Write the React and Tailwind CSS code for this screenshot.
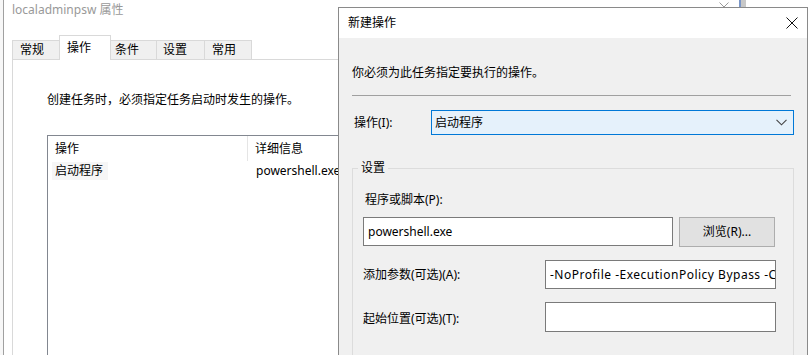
import React from 'react';

const font = { fontFamily: '"Noto Sans", "Noto Sans CJK SC", sans-serif' };

function Tab({ label, selected, width, pad }) {
  if (selected) {
    return (
      <div
        className={`relative z-10 -mr-px -mb-px h-[25px] border border-b-0 border-[#d9d9d9] bg-white pt-[4px] leading-4 ${width} ${pad}`}
      >
        {label}
      </div>
    );
  }
  return (
    <div
      className={`-mr-px flex h-[19px] items-center border border-b-0 border-[#d9d9d9] bg-[#f0f0f0] leading-4 ${width} ${pad}`}
    >
      {label}
    </div>
  );
}

function Chevron() {
  return (
    <svg width="11" height="7" viewBox="0 0 11 7" fill="none">
      <path d="M0.5 0.8 L5.5 5.8 L10.5 0.8" stroke="#444" strokeWidth="1.1" />
    </svg>
  );
}

function CloseX() {
  return (
    <svg width="12" height="12" viewBox="0 0 12 12" fill="none">
      <path d="M0.5 0.5 L11.5 11.5 M11.5 0.5 L0.5 11.5" stroke="#111" strokeWidth="1" />
    </svg>
  );
}

export default function App() {
  return (
    <div
      className="relative flex h-[355px] w-[810px] overflow-hidden bg-white text-[12px] text-black"
      style={font}
    >
      {/* window behind, only its edge shows */}
      <div className="w-[4px] shrink-0 border-r border-[#a0a0a0] bg-[#f7f7f7]" />

      {/* properties window */}
      <div className="flex w-[742px] shrink-0 flex-col overflow-hidden bg-white">
        <div className="flex h-[35px] shrink-0 items-start">
          <div className="ml-[8px] mt-[2px] leading-4 text-[#999]">localadminpsw 属性</div>
          <svg className="ml-auto mt-[2px]" width="10" height="10" viewBox="0 0 10 10" fill="none">
            <path d="M0.5 0.5 L9.5 9.5 M9.5 0.5 L0.5 9.5" stroke="#9a9a9a" strokeWidth="1" />
          </svg>
          <div className="ml-[10px] h-[8px] w-[2px] bg-[#7a96c8]" />
          <div className="h-[8px] w-[5px] bg-[#c8c8c8]" />
        </div>

        <div className="ml-[8px] flex shrink-0 items-end">
          <Tab label="常规" width="w-[48px]" pad="pl-[7px]" />
          <Tab label="操作" selected width="w-[52px]" pad="pl-[7px]" />
          <Tab label="条件" width="w-[47px]" pad="pl-[4px]" />
          <Tab label="设置" width="w-[49px]" pad="pl-[6px]" />
          <Tab label="常用" width="w-[48px]" pad="pl-[7px]" />
        </div>

        <div className="ml-[8px] flex-1 border border-b-0 border-r-0 border-[#d9d9d9] bg-white pl-[34px] pt-[32px]">
          <div className="leading-4">创建任务时，必须指定任务启动时发生的操作。</div>
          <div className="mt-[27px] h-[300px] border border-r-0 border-b-0 border-[#828790] bg-white">
            <div className="flex h-[25px]">
              <div className="flex w-[200px] items-center border-r border-[#e5e5e5] pl-[7px]">操作</div>
              <div className="flex items-center pl-[7px]">详细信息</div>
            </div>
            <div className="flex h-[20px] items-center">
              <div className="w-[200px] pl-[4px]">
                <span className="inline-block bg-[#f6f6f6] py-[1px] pl-[3px] pr-[5px] leading-4">启动程序</span>
              </div>
              <div className="pl-[8px] leading-4">powershell.exe</div>
            </div>
          </div>
        </div>
      </div>

      {/* new action dialog, on top */}
      <div className="absolute left-[338px] top-[7px] flex h-[360px] w-[470px] flex-col border border-[#8a8a8a] bg-[#f0f0f0]">
        <div className="flex h-[30px] shrink-0 items-center justify-between bg-white pl-[9px] pr-[9px]">
          <span className="leading-4">新建操作</span>
          <CloseX />
        </div>

        <div className="flex flex-col pl-[13px] pr-[13px] pt-[27px]">
          <div className="leading-4">你必须为此任务指定要执行的操作。</div>
          <div className="mt-[14px] mr-[3px] h-px bg-[#a0a0a0]" />

          <div className="mt-[14px] flex items-center">
            <div className="w-[79px] pl-[2px] leading-4">操作(I):</div>
            <div className="flex h-[25px] flex-1 items-center justify-between border border-[#0078d7] bg-[#e5f1fb] pl-[3px] pr-[6px]">
              <span className="leading-4">启动程序</span>
              <Chevron />
            </div>
          </div>

          <fieldset className="mt-[25px] h-[200px] border border-[#dcdcdc]">
            <legend className="ml-[5px] px-[3px] leading-4">设置</legend>
            <div className="pl-[10px]">
              <div className="ml-[2px] mt-[16px] leading-4">程序或脚本(P):</div>
              <div className="mt-[9px] flex items-start">
                <div className="flex h-[29px] w-[310px] items-center border border-[#7a7a7a] bg-white pl-[4px] leading-4">
                  powershell.exe
                </div>
                <div className="ml-[6px] flex h-[30px] w-[96px] items-center justify-center border border-[#adadad] bg-[#e1e1e1] leading-4">
                  浏览(R)...
                </div>
              </div>
              <div className="mt-[13px] flex items-center">
                <div className="w-[182px] leading-4">添加参数(可选)(A):</div>
                <div className="flex h-[29px] w-[231px] items-center overflow-hidden whitespace-nowrap border border-[#7a7a7a] bg-white pl-[4px] leading-4 tracking-[0.5px]">
                  -NoProfile -ExecutionPolicy Bypass -Command
                </div>
              </div>
              <div className="mt-[13px] flex items-center">
                <div className="w-[182px] pt-[3px] leading-4">起始位置(可选)(T):</div>
                <div className="h-[30px] w-[231px] border border-[#7a7a7a] bg-white" />
              </div>
            </div>
          </fieldset>
        </div>
      </div>
    </div>
  );
}
